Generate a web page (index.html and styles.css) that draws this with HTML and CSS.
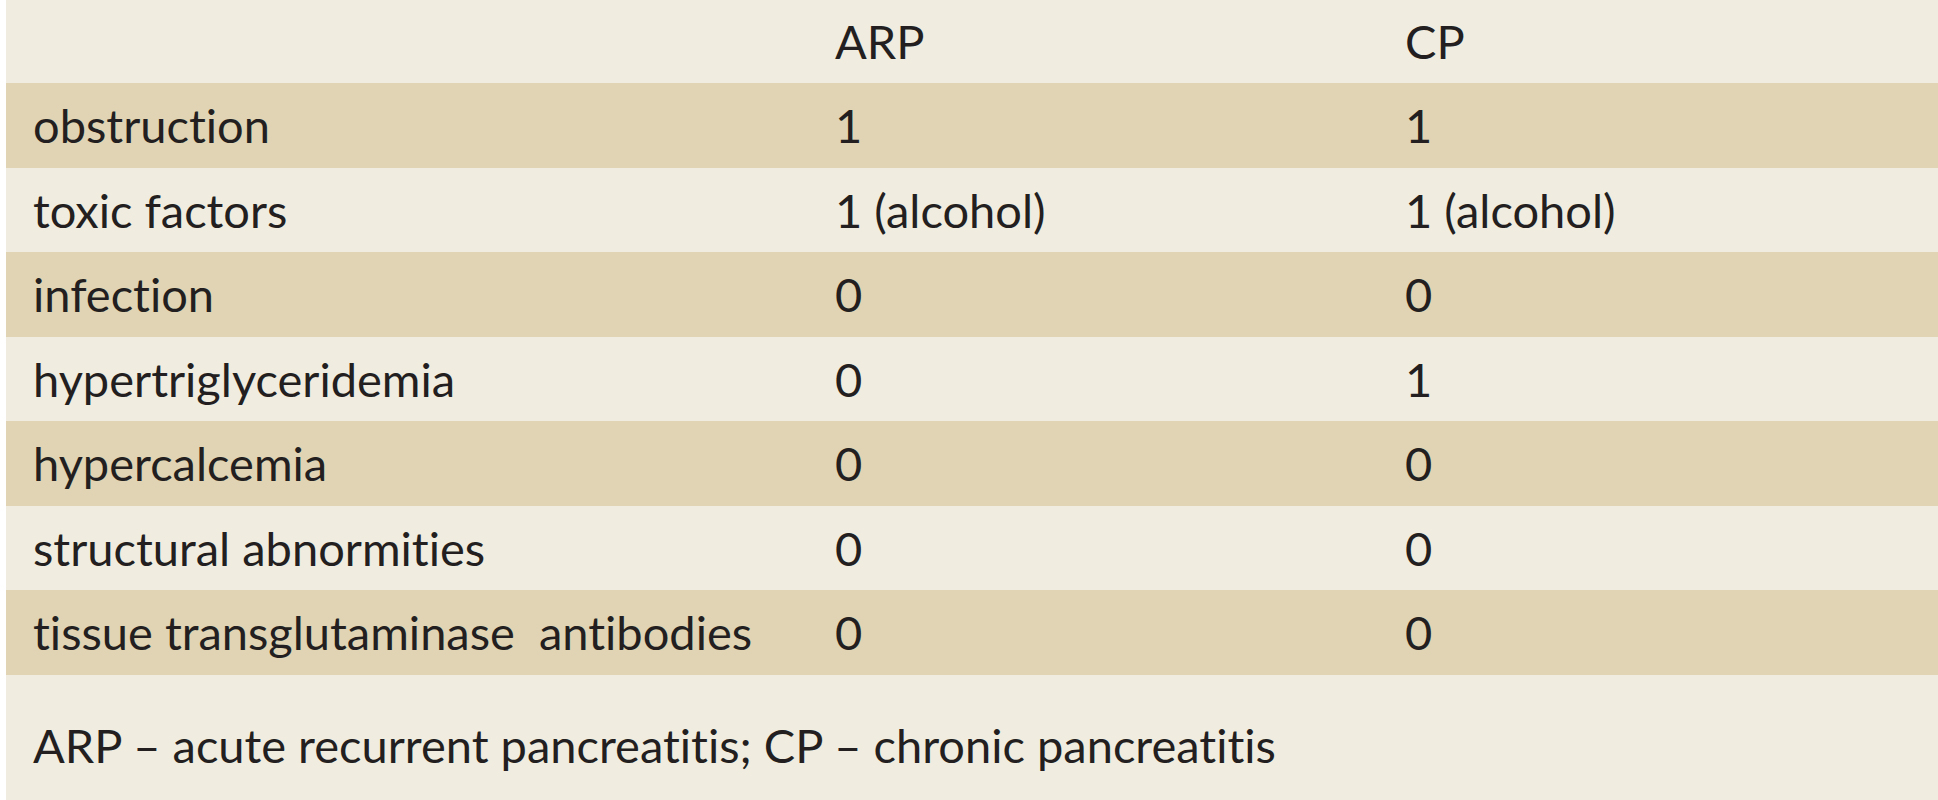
FILE: index.html
```html
<!DOCTYPE html>
<html lang="en">
<head>
<meta charset="utf-8">
<title>Causes of pancreatitis</title>
<link rel="stylesheet" href="styles.css">
</head>
<body>
<div class="table">
  <div class="row head">
    <div class="cell"></div>
    <div class="cell">ARP</div>
    <div class="cell">CP</div>
  </div>
  <div class="row dark">
    <div class="cell">obstruction</div>
    <div class="cell">1</div>
    <div class="cell">1</div>
  </div>
  <div class="row">
    <div class="cell">toxic factors</div>
    <div class="cell">1 (alcohol)</div>
    <div class="cell">1 (alcohol)</div>
  </div>
  <div class="row dark">
    <div class="cell">infection</div>
    <div class="cell">0</div>
    <div class="cell">0</div>
  </div>
  <div class="row">
    <div class="cell">hypertriglyceridemia</div>
    <div class="cell">0</div>
    <div class="cell">1</div>
  </div>
  <div class="row dark">
    <div class="cell">hypercalcemia</div>
    <div class="cell">0</div>
    <div class="cell">0</div>
  </div>
  <div class="row">
    <div class="cell">structural abnormities</div>
    <div class="cell">0</div>
    <div class="cell">0</div>
  </div>
  <div class="row dark">
    <div class="cell">tissue transglutaminase&nbsp; antibodies</div>
    <div class="cell">0</div>
    <div class="cell">0</div>
  </div>
  <div class="note">ARP – acute recurrent pancreatitis; CP – chronic pancreatitis</div>
</div>
</body>
</html>
```
FILE: styles.css
```css
html, body {
  margin: 0;
  padding: 0;
  background: #ffffff;
}

body {
  font-family: Lato, "Liberation Sans", sans-serif;
  font-size: 47px;
  font-variant-ligatures: none;
  font-feature-settings: "liga" 0, "clig" 0;
  color: #231f20;
}

.table {
  margin-left: 6px;
  height: 800px;
  background: #f1ece0;
  display: flex;
  flex-direction: column;
}

.row {
  display: grid;
  grid-template-columns: 802px 570px 1fr;
  padding-left: 27px;
  height: 84.5px;
  line-height: 84.5px;
  white-space: nowrap;
}

.row.head {
  height: 83px;
  line-height: 83px;
}

.row.dark {
  background: #e0d4b4;
}

.note {
  flex: 1;
  padding-left: 27px;
  padding-top: 42px;
  line-height: 1.2;
  white-space: nowrap;
}
```
